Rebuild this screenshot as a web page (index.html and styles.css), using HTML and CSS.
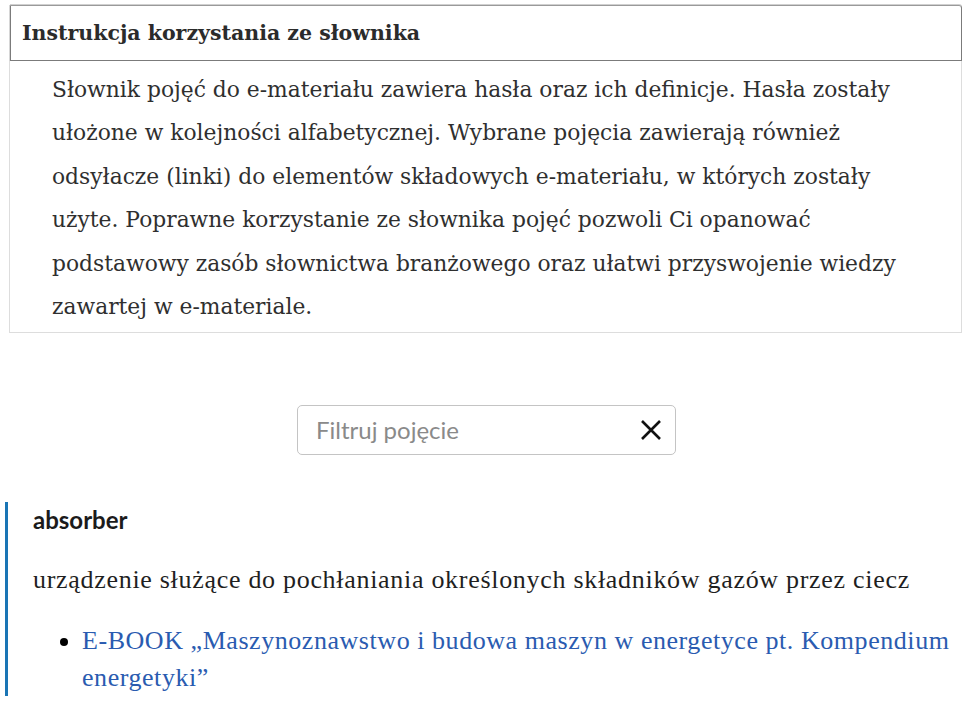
FILE: index.html
```html
<!DOCTYPE html>
<html lang="pl">
<head>
<meta charset="utf-8">
<title>Słownik pojęć</title>
<link rel="stylesheet" href="styles.css">
</head>
<body>
<div class="page">
  <section class="instr">
    <div class="instr-head">Instrukcja korzystania ze słownika</div>
    <div class="instr-body">
      <p>Słownik pojęć do e-materiału zawiera hasła oraz ich definicje. Hasła zostały ułożone w kolejności alfabetycznej. Wybrane pojęcia zawierają również odsyłacze (linki) do elementów składowych e-materiału, w których zostały użyte. Poprawne korzystanie ze słownika pojęć pozwoli Ci opanować podstawowy zasób słownictwa branżowego oraz ułatwi przyswojenie wiedzy zawartej w e-materiale.</p>
    </div>
  </section>

  <div class="filter-wrap">
    <div class="filter">
      <input class="filter-input" type="text" placeholder="Filtruj pojęcie">
      <svg class="clear" width="22" height="22" viewBox="0 0 22 22" aria-hidden="true">
        <path d="M2 2 L20 20 M20 2 L2 20" stroke="#111" stroke-width="2.6" fill="none"/>
      </svg>
    </div>
  </div>

  <article class="entry">
    <h3 class="term">absorber</h3>
    <p class="def">urządzenie służące do pochłaniania określonych składników gazów przez ciecz</p>
    <ul class="refs">
      <li><a href="#">E-BOOK „Maszynoznawstwo i budowa maszyn w energetyce pt. Kompendium energetyki”</a></li>
    </ul>
  </article>
</div>
</body>
</html>
```

FILE: styles.css
```css
html, body {
  margin: 0;
  padding: 0;
  background: #fff;
}
.page {
  padding: 5px 8px 0 9px;
}
.instr-head {
  margin-left: 1px;
  border: 1px solid #7b7b7b;
  border-top-color: #9a9a9a;
  border-radius: 0 3px 0 0;
  box-shadow: 0 -1px 0 #d0d0d0, -1px 0 0 #d6d6d6;
  box-sizing: border-box;
  height: 56px;
  padding: 0 11px;
  display: flex;
  align-items: center;
  font-family: "DejaVu Serif", serif;
  font-weight: bold;
  font-size: 20.5px;
  color: #2b2b2b;
}
.instr-body {
  border: 1px solid #dddddd;
  border-top: none;
  padding: 7px 30px 4px 42px;
  font-family: "DejaVu Serif", serif;
  font-size: 21.8px;
  line-height: 43.4px;
  color: #2f2f2f;
}
.instr-body p {
  margin: 0;
}
.filter-wrap {
  display: flex;
  justify-content: center;
  padding-top: 72px;
}
.filter {
  width: 379px;
  height: 50px;
  box-sizing: border-box;
  border: 1px solid #c4c4c4;
  border-radius: 5px;
  display: flex;
  align-items: center;
  padding: 0 13px 2px 18px;
  margin-left: 2px;
}
.filter-input {
  flex: 1;
  border: none;
  outline: none;
  padding: 0;
  font-family: Lato, sans-serif;
  font-size: 24px;
  color: #333;
  background: transparent;
}
.filter-input::placeholder {
  color: #8a8a8a;
}
.clear {
  flex: none;
  margin-top: 2px;
}
.entry {
  margin: 47px 0 0 -4px;
  border-left: 3px solid #1a75b5;
  padding: 0 0 0 25px;
}
.term {
  margin: 0;
  padding-top: 4px;
  font-family: Lato, sans-serif;
  font-weight: bold;
  font-size: 24px;
  line-height: 28px;
  color: #1b1b1b;
}
.def {
  margin: 30px 0 0;
  font-family: "Liberation Serif", serif;
  font-size: 26px;
  letter-spacing: 0.7px;
  line-height: 32px;
  color: #1f1f1f;
}
.refs {
  margin: 26px 0 0;
  padding: 0 0 0 49px;
  font-family: "Liberation Serif", serif;
  font-size: 26px;
  letter-spacing: 0.55px;
  line-height: 37px;
}
.refs a {
  color: #2a5bb0;
  text-decoration: none;
}
```
